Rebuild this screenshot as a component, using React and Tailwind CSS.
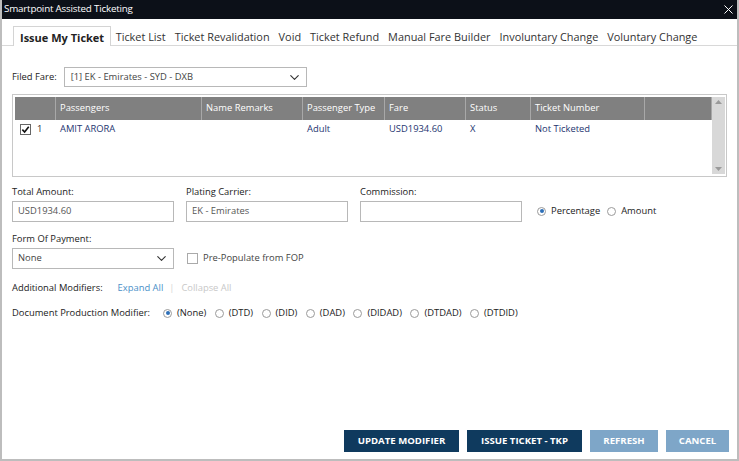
import { ChevronDown, X } from "lucide-react";

const tabs = ["Issue My Ticket", "Ticket List", "Ticket Revalidation", "Void", "Ticket Refund", "Manual Fare Builder", "Involuntary Change", "Voluntary Change"];

const cols = [
  { label: "", w: "w-[41px]" },
  { label: "Passengers", w: "w-[146px]" },
  { label: "Name Remarks", w: "w-[101px]" },
  { label: "Passenger Type", w: "w-[82px]" },
  { label: "Fare", w: "w-[81px]" },
  { label: "Status", w: "w-[65px]" },
  { label: "Ticket Number", w: "w-[114px]" },
  { label: "", w: "flex-1" },
];

function Radio({ checked, label }) {
  return (
    <label className="flex items-center gap-[5px]">
      <span className="w-[9px] h-[9px] rounded-full border border-[#9a9a9a] flex items-center justify-center bg-white">
        {checked && <span className="w-[4px] h-[4px] rounded-full bg-[#2d6fb8]" />}
      </span>
      <span>{label}</span>
    </label>
  );
}

function Field({ label, value, className = "" }) {
  return (
    <div className={`flex flex-col ${className}`}>
      <span className="h-[13px] leading-[13px]">{label}</span>
      <div className="mt-[3px] h-[21px] w-[162px] border border-[#b8b8b8] flex items-center px-[5px] text-[#555]">{value}</div>
    </div>
  );
}

export default function App() {
  return (
    <div className="w-[739px] h-[461px] bg-white flex flex-col text-[9.4px] text-[#222] border-x-2 border-b-2 border-[#bdbdbd] overflow-hidden whitespace-nowrap" style={{ fontFamily: "'Open Sans', sans-serif" }}>
      <div className="h-[19px] bg-[#0c1018] flex items-center justify-between pl-[4px] pr-[3px] text-white shrink-0 -mx-[2px]">
        <span className="text-[9.8px] tracking-[-0.2px]">Smartpoint Assisted Ticketing</span>
        <X size={15} strokeWidth={1.6} />
      </div>

      <div className="mt-[8px] flex items-end border-b border-[#d8d8d8] text-[10.9px] h-[19px] pl-[11px]">
        {tabs.map((t, i) =>
          i === 0 ? (
            <div key={t} className="h-[20px] -mb-px px-[6px] pt-[3px] border-x border-t border-[#d4d4d4] bg-white font-bold text-[11px] flex items-center">{t}</div>
          ) : (
            <div key={t} className="h-[19px] px-[4.5px] pt-[3px] flex items-center text-[#333]">{t}</div>
          )
        )}
      </div>

      <div className="px-[10px]">
        <div className="mt-[21px] flex items-center gap-[7px]">
          <span>Filed Fare:</span>
          <div className="h-[20px] w-[243px] border border-[#b8b8b8] flex items-center justify-between pl-[6px] pr-[4px] text-[#444]">
            <span>[1] EK - Emirates - SYD - DXB</span>
            <ChevronDown size={15} strokeWidth={1.8} className="text-[#333]" />
          </div>
        </div>

        <div className="mt-[7px] h-[83px] border border-[#c8c8c8] flex p-[2px] pr-[1px]">
          <div className="flex-1 flex flex-col">
            <div className="h-[23px] bg-[#808080] flex text-white">
              {cols.map((c, i) => (
                <div key={i} className={`${c.w} h-full flex items-center px-[4px] border-r border-[#a8a8a8]`}>{c.label}</div>
              ))}
            </div>
            <div className="flex h-[19px] items-center text-[#1e3570]">
              <div className="w-[41px] flex items-center gap-[6px] pl-[5px] text-[#333]">
                <span className="w-[11px] h-[11px] border border-[#666] bg-white flex items-center justify-center">
                  <svg width="9" height="9" viewBox="0 0 10 10"><path d="M1.5 5.2 L4 7.8 L8.6 2" fill="none" stroke="#111" strokeWidth="1.8" /></svg>
                </span>
                <span>1</span>
              </div>
              <div className="w-[146px] px-[4px]">AMIT ARORA</div>
              <div className="w-[101px] px-[4px]"></div>
              <div className="w-[82px] px-[4px]">Adult</div>
              <div className="w-[81px] px-[4px]">USD1934.60</div>
              <div className="w-[65px] px-[4px]">X</div>
              <div className="w-[114px] px-[4px]">Not Ticketed</div>
            </div>
          </div>
          <div className="w-[13px] bg-[#d8d8d8] flex flex-col justify-between items-center py-[3px]">
            <svg width="7" height="4" viewBox="0 0 7 4"><path d="M0 4 L3.5 0 L7 4Z" fill="#9a9a9a" /></svg>
            <svg width="7" height="4" viewBox="0 0 7 4"><path d="M0 0 L3.5 4 L7 0Z" fill="#9a9a9a" /></svg>
          </div>
        </div>

        <div className="mt-[8px] flex items-end">
          <Field label="Total Amount:" value="USD1934.60" />
          <Field label="Plating Carrier:" value="EK - Emirates" className="ml-[12px]" />
          <Field label="Commission:" value="" className="ml-[12px]" />
          <div className="ml-[15px] h-[21px] flex items-center gap-[7px]">
            <Radio checked label="Percentage" />
            <Radio label="Amount" />
          </div>
        </div>

        <div className="mt-[10px] flex flex-col">
          <span className="h-[13px] leading-[13px]">Form Of Payment:</span>
          <div className="mt-[3px] flex items-center">
            <div className="h-[21px] w-[162px] border border-[#b8b8b8] flex items-center justify-between pl-[5px] pr-[4px] text-[#444]">
              <span>None</span>
              <ChevronDown size={15} strokeWidth={1.8} className="text-[#333]" />
            </div>
            <span className="ml-[13px] w-[11px] h-[11px] border border-[#aaa] bg-white" />
            <span className="ml-[5px] text-[#444]">Pre-Populate from FOP</span>
          </div>
        </div>

        <div className="mt-[12px] flex items-center">
          <span>Additional Modifiers:</span>
          <span className="ml-[15px] text-[#4a90c8]">Expand All</span>
          <span className="ml-[6px] text-[#d4d4d4]">|</span>
          <span className="ml-[7px] text-[#c8c8c8]">Collapse All</span>
        </div>

        <div className="mt-[11px] flex items-center">
          <span>Document Production Modifier:</span>
          <div className="ml-[13px] flex items-center gap-[8.5px]">
            <Radio checked label="(None)" />
            <Radio label="(DTD)" />
            <Radio label="(DID)" />
            <Radio label="(DAD)" />
            <Radio label="(DIDAD)" />
            <Radio label="(DTDAD)" />
            <Radio label="(DTDID)" />
          </div>
        </div>
      </div>

      <div className="mt-auto mb-[7px] flex justify-end gap-[8px] pr-[8px] text-[9.6px] font-bold text-white">
        <button className="h-[22px] w-[115px] bg-[#0f3a5e]">UPDATE MODIFIER</button>
        <button className="h-[22px] w-[115px] bg-[#0f3a5e]">ISSUE TICKET - TKP</button>
        <button className="h-[22px] w-[68px] bg-[#7ea6c8]">REFRESH</button>
        <button className="h-[22px] w-[63px] bg-[#7ea6c8]">CANCEL</button>
      </div>
    </div>
  );
}
